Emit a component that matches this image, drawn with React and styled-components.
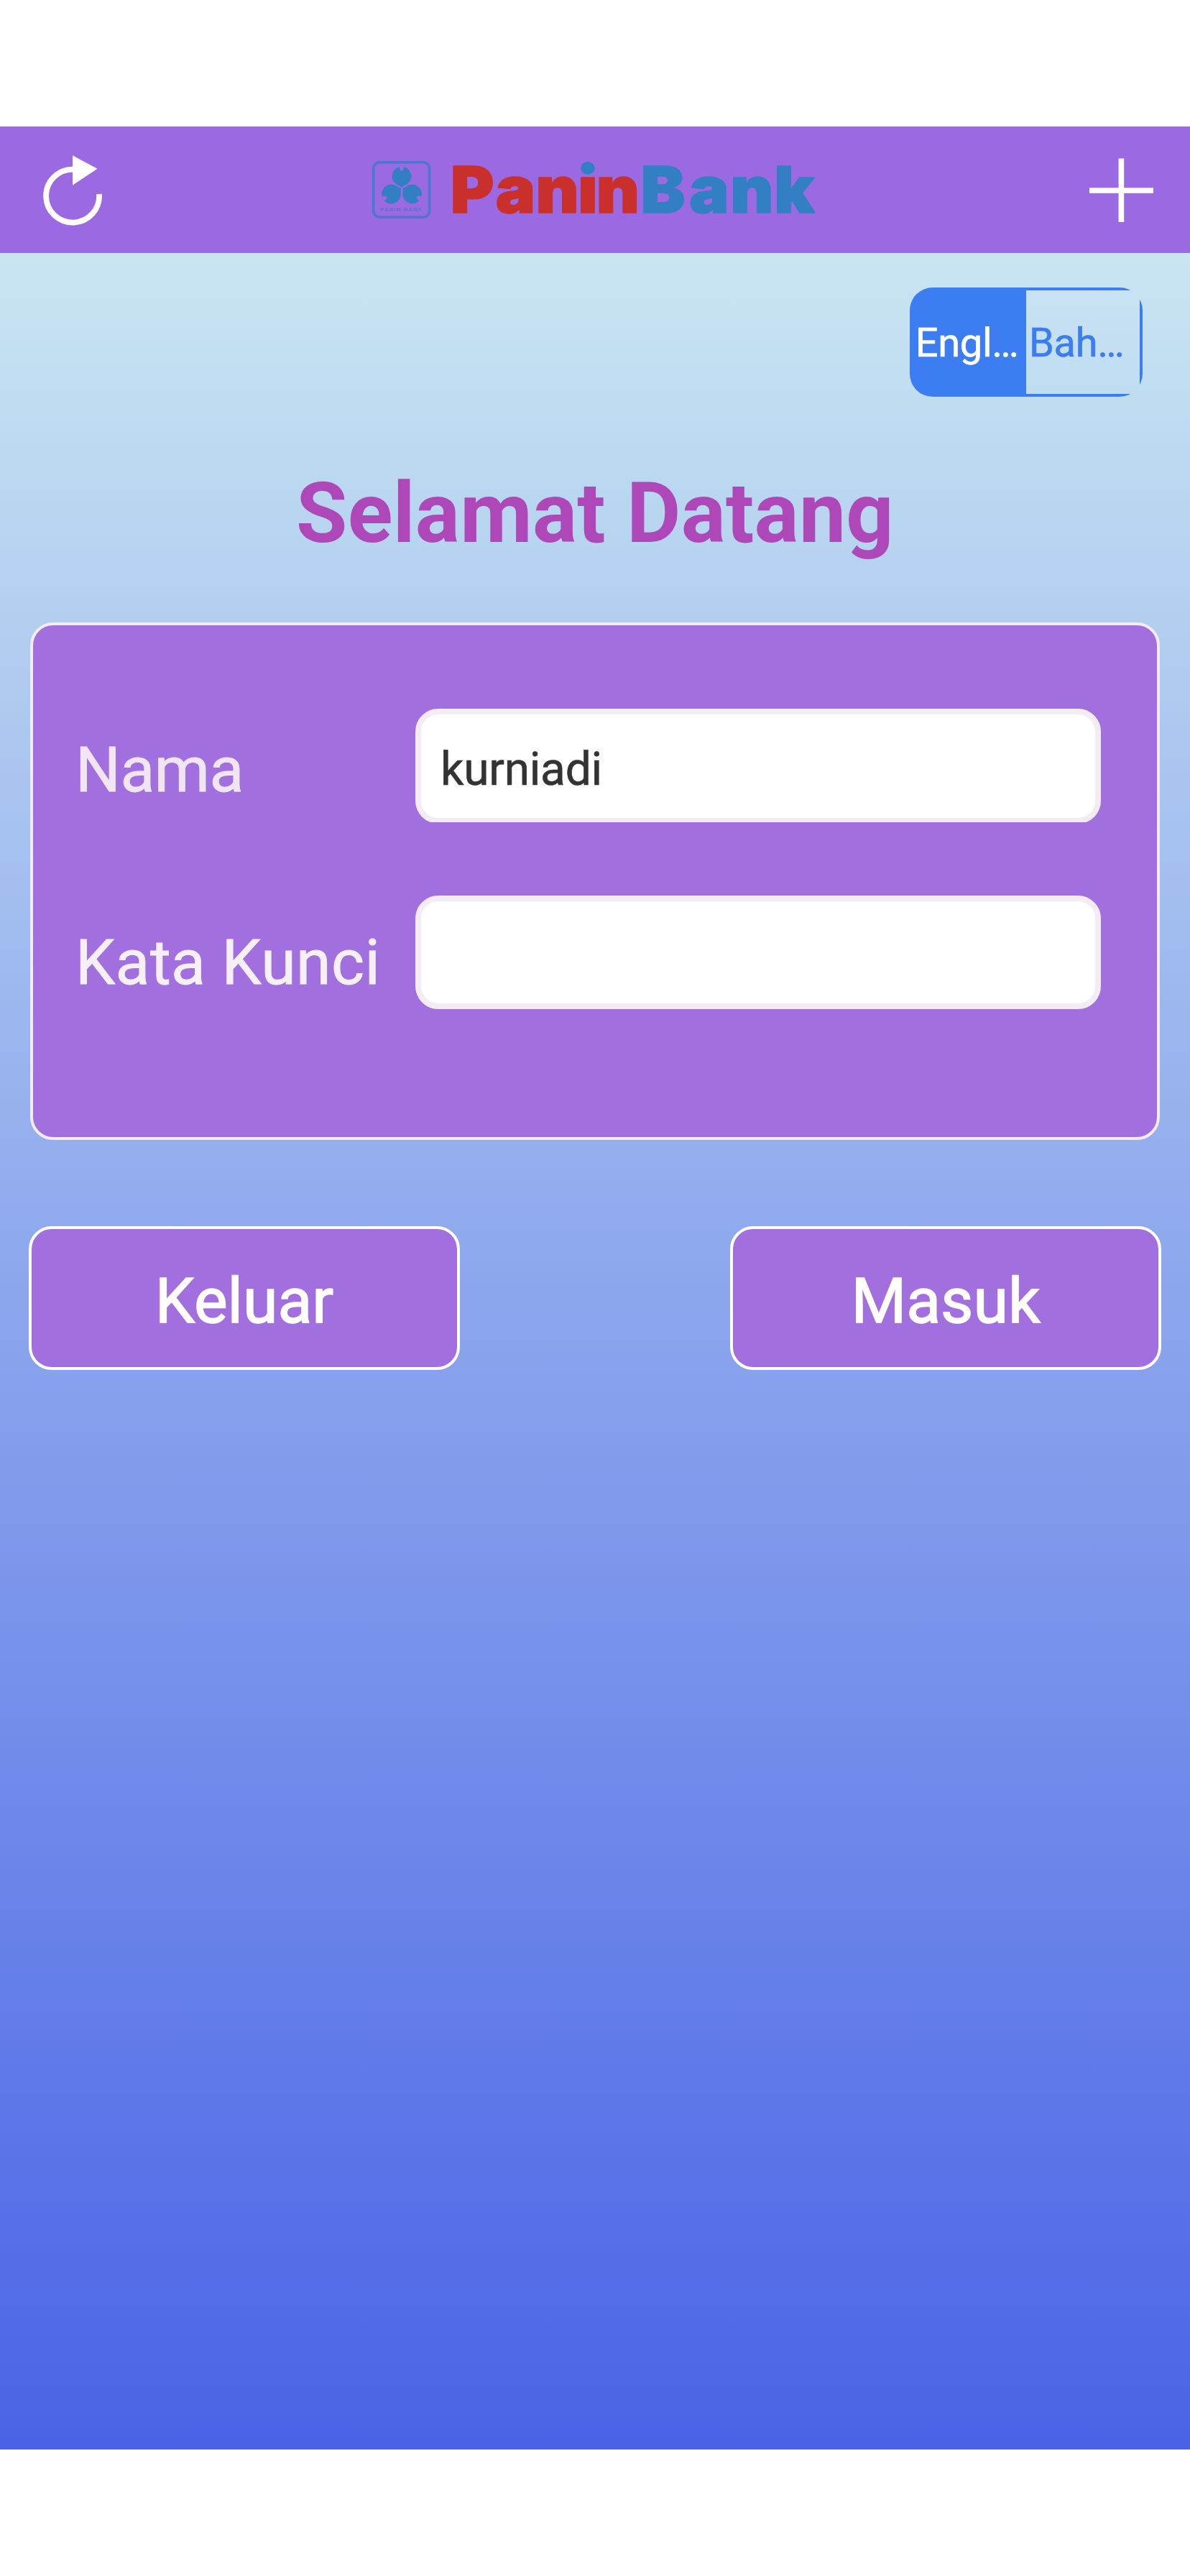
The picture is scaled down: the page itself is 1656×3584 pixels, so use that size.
import React from "react";
import styled, { createGlobalStyle } from "styled-components";

const GlobalStyle = createGlobalStyle`
  * { box-sizing: border-box; }
  body { margin: 0; background: #fff; }
`;

const Screen = styled.div`
  width: 1656px;
  height: 3584px;
  padding: 176px 0;
  display: flex;
  flex-direction: column;
  background: #fff;
  font-family: Roboto, "Liberation Sans", sans-serif;
`;

const Header = styled.header`
  height: 176px;
  flex: none;
  display: flex;
  align-items: center;
  justify-content: space-between;
  background: #9b6ae2;
`;

const IconButton = styled.button`
  width: 192px;
  height: 176px;
  padding: 0;
  border: 0;
  background: none;
`;

const Drawing = styled.svg`
  display: block;
`;

const Wordmark = styled.text`
  font-family: Inter, "Liberation Sans", sans-serif;
  font-weight: 900;
  font-size: 90px;
  stroke-width: 1.6px;
  stroke-linejoin: round;
`;

const Emblem = styled.text`
  font-family: "Liberation Sans", sans-serif;
  font-weight: 700;
  font-size: 7.5px;
`;

const Main = styled.main`
  flex: 1;
  display: flex;
  flex-direction: column;
  padding: 48px 40px 0;
  background: linear-gradient(#c9e5f2, #b3d0f0 16%, #94aeee 41%, #4a63e6);
`;

const LanguageSwitch = styled.div`
  align-self: flex-end;
  width: 324px;
  height: 152px;
  margin-right: 26px;
  padding: 4px;
  display: grid;
  grid-template-columns: 158px 158px;
  border-radius: 32px;
  background: #3c7df2;
`;

const Language = styled.button`
  min-width: 0;
  height: 144px;
  padding: 2px 0 0 ${(p) => (p.$active ? 3.7 : 4)}px;
  border: 0;
  border-radius: ${(p) => (p.$active ? "28px 0 0 28px" : 0)};
  text-align: left;
  font: 400 56px/142px Roboto, sans-serif;
  letter-spacing: -0.3px;
  -webkit-text-stroke: 0.6px currentColor;
  white-space: nowrap;
  color: ${(p) => (p.$active ? "#fff" : "#3c7df2")};
  background: ${(p) => (p.$active ? "#3c7df2" : "linear-gradient(#c7e2f2, #c0dcf1)")};
`;

const Title = styled.h1`
  margin: 94px 0 0;
  height: 136px;
  line-height: 136px;
  text-align: center;
  font-size: 116px;
  font-weight: 700;
  letter-spacing: 0.3px;
  white-space: nowrap;
  color: #ae48b8;
`;

const Panel = styled.form`
  height: 720px;
  margin: 84px 2px 0;
  padding: 116px 78px 0 59px;
  border: 4px solid #f3ebf5;
  border-radius: 32px;
  background: #a26fdf;
`;

const Row = styled.div`
  display: flex;
  justify-content: space-between;
  height: 158px;
  margin-bottom: 102px;
`;

const Label = styled.label`
  padding-top: ${(p) => p.$drop}px;
  line-height: 104px;
  font-size: 88px;
  letter-spacing: ${(p) => p.$tracking}px;
  -webkit-text-stroke: 0.9px currentColor;
  white-space: nowrap;
  color: ${(p) => p.$tone};
`;

const Clip = styled.div`
  width: 954px;
  height: 158px;
  overflow: hidden;
`;

const Input = styled.input`
  display: block;
  width: 954px;
  height: ${(p) => p.$height}px;
  margin: 0;
  padding: 8px 28px 0 27px;
  border: 8px solid #f3ebf5;
  border-radius: 32px;
  outline: 0;
  background: #fff;
  font: 400 64px Roboto, sans-serif;
  letter-spacing: -0.25px;
  -webkit-text-stroke: 0.6px currentColor;
  color: #333;
`;

const Actions = styled.div`
  display: flex;
  justify-content: space-between;
  margin-top: 120px;
`;

const Action = styled.button`
  width: 600px;
  height: 200px;
  padding: 6px 0 0;
  border: 4px solid #fff;
  border-radius: 32px;
  background: #a26fdf;
  color: #fff;
  font: 400 88px Roboto, sans-serif;
  -webkit-text-stroke: 1.5px currentColor;
`;

const Petal = ({ x, y, turn }) => (
  <g transform={`translate(${x} ${y}) rotate(${turn})`}>
    <path
      d="M-3.4 -12.9 L-2 -8.6 Q0 -6.4 2 -8.6 L3.4 -12.9 A13.4 13.4 0 0 1 5.5 12.3 Q2 13.4 0 16 Q-2 13.4 -5.5 12.3 A13.4 13.4 0 0 1 -3.4 -12.9Z"
      fill="#337fc4"
    />
  </g>
);

const Logo = () => (
  <Drawing width="640" height="176" viewBox="508 176 640 176">
    <defs>
      <linearGradient id="dot" gradientUnits="userSpaceOnUse" x1="0" y1="228" x2="0" y2="298">
        <stop offset="0.24" stopColor="#337fc4" />
        <stop offset="0.24" stopColor="#c9302c" />
      </linearGradient>
    </defs>
    <rect x="519.7" y="225.7" width="78" height="76.5" rx="9" fill="none" stroke="#4b78cf" strokeWidth="3.6" />
    <Petal x={559} y={245} turn={0} />
    <Petal x={544.5} y={270} turn={240} />
    <Petal x={573.7} y={270} turn={120} />
    <Emblem x="529" y="294.4" textLength="58" fill="#4b78cf">PANIN BANK</Emblem>
    <Wordmark
      transform="scale(1.03 1)"
      y="295.8"
      x="608.6 669.6 723.9 780.9 805.6 865.5 931.3 986.6 1045.8"
      fill="#c9302c"
      stroke="#c9302c"
    >
      Pan<tspan fill="url(#dot)" stroke="url(#dot)">i</tspan>n<tspan fill="#337fc4" stroke="#337fc4">Bank</tspan>
    </Wordmark>
  </Drawing>
);

export default function App() {
  return (
    <>
      <GlobalStyle />
      <Screen>
        <Header>
          <IconButton aria-label="Refresh">
            <Drawing width="192" height="176" viewBox="0 176 192 176">
              <path d="M138 270 A37 37 0 1 1 101 235.6" fill="none" stroke="#fff" strokeWidth="7.8" />
              <path d="M101 216.3 L135.5 234.7 L101 257.7Z" fill="#fff" />
            </Drawing>
          </IconButton>
          <Logo />
          <IconButton aria-label="Add">
            <Drawing width="192" height="176" viewBox="1464 176 192 176">
              <path d="M1516 265H1605M1560.4 220.5V309" stroke="#fff" strokeWidth="7.6" />
            </Drawing>
          </IconButton>
        </Header>
        <Main>
          <LanguageSwitch>
            <Language $active>Engl…</Language>
            <Language>Bah…</Language>
          </LanguageSwitch>
          <Title>Selamat Datang</Title>
          <Panel>
            <Row>
              <Label htmlFor="name" $drop={33} $tone="#f0e6f3" $tracking={-0.4}>Nama</Label>
              <Clip>
                <Input id="name" $height={160} defaultValue="kurniadi" />
              </Clip>
            </Row>
            <Row>
              <Label htmlFor="password" $drop={41} $tone="#f5eff7" $tracking={0.4}>Kata Kunci</Label>
              <Clip>
                <Input id="password" type="password" $height={158} />
              </Clip>
            </Row>
          </Panel>
          <Actions>
            <Action>Keluar</Action>
            <Action>Masuk</Action>
          </Actions>
        </Main>
      </Screen>
    </>
  );
}
